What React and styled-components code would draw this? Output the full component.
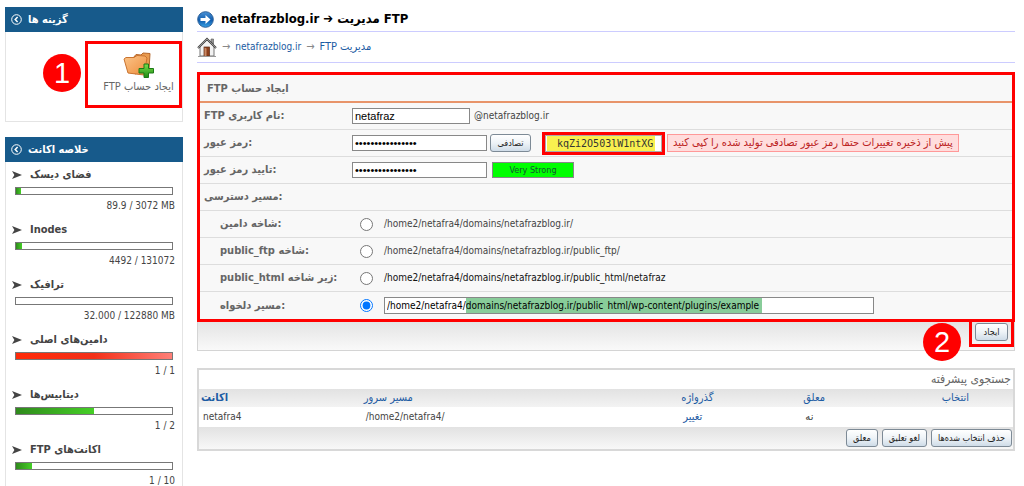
import React from 'react'
import styled, { createGlobalStyle } from 'styled-components'

const stats = [
  { title: 'فضای دیسک', value: '89.9 / 3072 MB', percent: 3 },
  { title: 'Inodes', value: '4492 / 131072', percent: 4 },
  { title: 'ترافیک', value: '32.000 / 122880 MB', percent: 0 },
  { title: 'دامین‌های اصلی', value: '1 / 1', percent: 100 },
  { title: 'دیتابیس‌ها', value: '1 / 2', percent: 50 },
  { title: 'اکانت‌های FTP', value: '1 / 10', percent: 10 },
]

const paths = [
  { id: 'domain', label: 'شاخه دامین', path: '/home2/netafra4/domains/netafrazblog.ir/' },
  { id: 'ftp', label: 'شاخه public_ftp', path: '/home2/netafra4/domains/netafrazblog.ir/public_ftp/' },
  { id: 'html', label: 'زیر شاخه public_html', path: '/home2/netafra4/domains/netafrazblog.ir/public_html/netafraz', dark: true },
]

const chevron = (
  <svg width='11' height='11' viewBox='0 0 11 11' fill='none' stroke='#fff'>
    <circle cx='5.5' cy='5.5' r='4.8' />
    <path d='M6.6 3 4.2 5.5 6.6 8' strokeWidth='1.5' />
  </svg>
)

const arrowHead = (
  <svg width='10' height='8' viewBox='0 0 10 8'>
    <path d='M0 0 10 4 0 8 2.4 4Z' fill='#444' />
  </svg>
)

const folderAdd = (
  <svg width='32' height='26' viewBox='0 0 32 26'>
    <defs>
      <linearGradient id='folder' x1='0' y1='0' x2='1' y2='1'>
        <stop offset='0' stopColor='#fbc58a' />
        <stop offset='1' stopColor='#ee8d3c' />
      </linearGradient>
      <linearGradient id='plus' x1='0' y1='0' x2='0' y2='1'>
        <stop offset='0' stopColor='#7be04a' />
        <stop offset='1' stopColor='#1d8a12' />
      </linearGradient>
    </defs>
    <path d='M10 6 13 2.500 18 3 20 1 27 1.500 26 18 12 22Z' fill='#e99a4e' stroke='#b5662a' />
    <path d='M1 7 3 5.500 11 5.500 14 3.500 22 4 24 6 21 23 5 21Z' fill='url(#folder)' stroke='#c9732f' />
    <path d='M21 12h4.500v4.500h5v4.500h-5v4.500h-4.500v-4.500h-5v-4.500h5Z' fill='url(#plus)' stroke='#1c7a16' />
  </svg>
)

const blueArrow = (
  <svg width='17' height='17' viewBox='0 0 17 17'>
    <defs>
      <linearGradient id='ball' x1='0' y1='0' x2='0' y2='1'>
        <stop offset='0' stopColor='#4b93d6' />
        <stop offset='0.55' stopColor='#0f5cae' />
        <stop offset='1' stopColor='#39a4e6' />
      </linearGradient>
    </defs>
    <circle cx='8.5' cy='8.5' r='7.8' fill='url(#ball)' stroke='#2c5f98' />
    <path d='M3.500 7h5V4l5 4.500-5 4.500v-3h-5Z' fill='#fff' />
  </svg>
)

const house = (
  <svg width='20' height='20' viewBox='0 0 20 20'>
    <path d='M14 2h2.500v5L14 5Z' fill='#999' stroke='#555' strokeWidth='.6' />
    <path d='M3 9 10 3l7 6v10H3Z' fill='#f2f2f2' stroke='#777' />
    <path d='M1 11 10 2l9 9' fill='none' stroke='#444' strokeWidth='2' />
    <path d='M1 11 10 2l9 9' fill='none' stroke='#ccc' strokeWidth='.6' />
    <rect x='7' y='10' width='5.500' height='9' fill='#8c3f1c' stroke='#5a2812' strokeWidth='.7' />
    <path d='M7.500 10.500 9.500 11.500v7.500H7.500Z' fill='#c98a66' />
    <path d='M1 19.500h18' stroke='#999' />
  </svg>
)

function FieldName({ children }) {
  return <><bdi dir='rtl'>{children}</bdi>:</>
}

function Sidebar() {
  return (
    <SidebarStyled>
      <section>
        <BoxTitle>{chevron}<span>گزینه ها</span></BoxTitle>
        <Options>
          <Step>1</Step>
          <CreateLink href='#create'>
            {folderAdd}
            <bdi dir='rtl'>ایجاد حساب FTP</bdi>
          </CreateLink>
        </Options>
      </section>
      <section>
        <BoxTitle>{chevron}<span>خلاصه اکانت</span></BoxTitle>
        <StatList>
          {stats.map((stat) => (
            <Stat key={stat.title}>
              <StatTitle>{arrowHead}<bdi>{stat.title}</bdi></StatTitle>
              <Meter><Fill $full={stat.percent === 100} style={{ width: `${stat.percent}%` }} /></Meter>
              <StatValue>{stat.value}</StatValue>
            </Stat>
          ))}
        </StatList>
      </section>
    </SidebarStyled>
  )
}

function CreateForm() {
  const [target, setTarget] = React.useState('custom')
  const [random, setRandom] = React.useState('kqZi2O503lW1ntXG')

  return (
    <form id='create' onSubmit={(e) => e.preventDefault()}>
      <Marked>
        <FormTitle><bdi dir='rtl'>ایجاد حساب FTP</bdi></FormTitle>
        <Row>
          <Name as='label' htmlFor='user'><FieldName>نام کاربری FTP</FieldName></Name>
          <TextInput id='user' $size='small' defaultValue='netafraz' />
          <Suffix>@netafrazblog.ir</Suffix>
        </Row>
        <Row>
          <Name as='label' htmlFor='pass'><FieldName>رمز عبور</FieldName></Name>
          <TextInput id='pass' type='password' defaultValue='kqZi2O503lW1ntXG' />
          <RandomButton type='button'>تصادفی</RandomButton>
          <Generated>
            <input aria-label='رمز عبور تصادفی' value={random} onChange={(e) => setRandom(e.target.value)} />
          </Generated>
          <Warning dir='rtl'>پیش از ذخیره تغییرات حتما رمز عبور تصادفی تولید شده را کپی کنید</Warning>
        </Row>
        <Row>
          <Name as='label' htmlFor='confirm'><FieldName>تایید رمز عبور</FieldName></Name>
          <TextInput id='confirm' type='password' defaultValue='kqZi2O503lW1ntXG' />
          <Strength>Very Strong</Strength>
        </Row>
        <Row>
          <Name><FieldName>مسیر دسترسی</FieldName></Name>
        </Row>
        {paths.map((item) => (
          <Row key={item.id}>
            <Name as='label' $indent htmlFor={item.id}><FieldName>{item.label}</FieldName></Name>
            <Radio id={item.id} name='path' checked={target === item.id} onChange={() => setTarget(item.id)} />
            <Path $dark={item.dark}>{item.path}</Path>
          </Row>
        ))}
        <Row>
          <Name as='label' $indent htmlFor='custom'><FieldName>مسیر دلخواه</FieldName></Name>
          <Radio id='custom' name='path' checked={target === 'custom'} onChange={() => setTarget('custom')} />
          <PathInput
            aria-label='مسیر دلخواه'
            defaultValue='/home2/netafra4/domains/netafrazblog.ir/public_html/wp-content/plugins/example'
          />
        </Row>
      </Marked>
      <FormFooter>
        <FooterStep>2</FooterStep>
        <SubmitFrame><Button type='submit'>ایجاد</Button></SubmitFrame>
      </FormFooter>
    </form>
  )
}

function Accounts() {
  return (
    <AccountsStyled>
      <Search><a href='#search'>جستجوی پیشرفته</a></Search>
      <Table>
        <thead>
          <tr>
            <Th $width='20%' $bold><a href='#account'>اکانت</a></Th>
            <Th $width='39%'><a href='#path'>مسیر سرور</a></Th>
            <Th $width='15%'><a href='#password'>گذرواژه</a></Th>
            <Th $width='17%'><a href='#suspended'>معلق</a></Th>
            <Th $width='9%'><a href='#select'>انتخاب</a></Th>
          </tr>
        </thead>
        <tbody>
          <tr>
            <td><Latin>netafra4</Latin></td>
            <td><Latin>/home2/netafra4/</Latin></td>
            <td><a href='#change'>تغییر</a></td>
            <td>نه</td>
            <td />
          </tr>
        </tbody>
      </Table>
      <Actions>
        <Button type='button'>معلق</Button>
        <Button type='button'>لغو تعلیق</Button>
        <Button type='button'>حذف انتخاب شده‌ها</Button>
      </Actions>
    </AccountsStyled>
  )
}

function App() {
  return (
    <>
      <GlobalStyle />
      <Page>
        <Sidebar />
        <Main>
          <Heading>{blueArrow}<h1>netafrazblog.ir ➔ مدیریت FTP</h1></Heading>
          <Breadcrumb>
            {house}
            <span>→</span>
            <a href='#domain'><Latin>netafrazblog.ir</Latin></a>
            <span>→</span>
            <a href='#ftp' dir='rtl'>مدیریت FTP</a>
          </Breadcrumb>
          <CreateForm />
          <Accounts />
        </Main>
      </Page>
    </>
  )
}

const GlobalStyle = createGlobalStyle`
  * {
    box-sizing: border-box;
  }

  body {
    margin: 0;
    overflow: hidden;
    background: #fff;
    color: #444;
    font-family: 'DejaVu Sans Condensed', 'DejaVu Sans', sans-serif;
    font-size: 11px;
    line-height: 14px;
  }

  a {
    color: #1c5ba3;
    text-decoration: none;
  }

  svg {
    flex: none;
  }
`

const Page = styled.div`
  display: flex;
  align-items: flex-start;
  gap: 14px;
  padding: 7px 9px 0 5px;
`

const SidebarStyled = styled.aside`
  display: flex;
  flex-direction: column;
  gap: 15px;
  flex: 0 0 178px;
`

const BoxTitle = styled.h2`
  display: flex;
  align-items: center;
  gap: 6px;
  height: 25px;
  margin: 0;
  padding-left: 6px;
  background: #175a8b;
  color: #fff;
  font-size: 11px;
`

const Options = styled.div`
  display: flex;
  justify-content: flex-end;
  align-items: flex-start;
  gap: 4px;
  height: 90px;
  padding-top: 9px;
  border: 1px solid #e4e4e4;
  border-top: none;
`

const Step = styled.span`
  display: flex;
  align-items: center;
  justify-content: center;
  width: 38px;
  height: 38px;
  margin-top: 13px;
  border-radius: 50%;
  background: #f00;
  color: #fff;
  font-family: 'Liberation Sans', sans-serif;
  font-size: 29px;
  line-height: 38px;
`

const CreateLink = styled.a`
  display: flex;
  flex-direction: column;
  align-items: center;
  gap: 2px;
  width: 97px;
  height: 67px;
  padding: 8px 0 0 10px;
  border: 3px solid #f00;
  color: #666;
  white-space: nowrap;
`

const StatList = styled.div`
  border: 1px solid #e4e4e4;
  border-top: none;
`

const Stat = styled.div`
  display: flex;
  flex-direction: column;
  gap: 4px;
  height: 55px;
  padding: 5px 7px 0 6px;
`

const StatTitle = styled.div`
  display: flex;
  align-items: center;
  gap: 8px;
  line-height: 16px;
  font-weight: bold;
`

const Meter = styled.div`
  height: 8px;
  margin: 0 2px 0 3px;
  border: 1px solid #777;
  background: #fff;
`

const Fill = styled.div`
  height: 100%;
  background: ${({ $full }) => $full
    ? 'linear-gradient(90deg, #ff2a08 0%, #f33018 50%, #ff8078 100%)'
    : 'linear-gradient(90deg, #2f8a1c, #45cf26)'};
`

const StatValue = styled.div`
  font-size: 10px;
  text-align: right;
`

const Main = styled.main`
  flex: 1;
  min-width: 0;
`

const Latin = styled.bdi`
  font-size: 10px;
`

const Heading = styled.header`
  display: flex;
  align-items: center;
  gap: 7px;
  height: 25px;
  border-bottom: 1px solid #ccf;

  h1 {
    margin: 0;
    color: #000;
    font-size: 13px;
  }
`

const Breadcrumb = styled.nav`
  display: flex;
  align-items: center;
  gap: 5px;
  height: 31px;
  margin-bottom: 9px;
  border-bottom: 1px solid #ccf;

  span {
    color: #888;
  }
`

const Marked = styled.div`
  border: 3px solid #f00;
  background: #f8f8f8;
`

const FormTitle = styled.h2`
  height: 28px;
  margin: 0;
  padding-left: 7px;
  border-bottom: 2px solid #e8946a;
  color: #666;
  font-size: 11px;
  line-height: 28px;
`

const Row = styled.div`
  display: flex;
  align-items: center;
  height: 27px;
  border-bottom: 1px solid #ddd;
  white-space: nowrap;

  &:last-child {
    border-bottom: none;
  }
`

const Name = styled.span`
  flex: 0 0 152px;
  padding-left: ${({ $indent }) => ($indent ? '20px' : '4px')};
  color: #666;
  font-weight: bold;
`

const TextInput = styled.input`
  width: ${({ $size }) => ($size === 'small' ? '118px' : '135px')};
  height: 16px;
  padding: 0 2px;
  border: 1px solid #888;
  background: #fff;
  color: #000;
  font-family: 'Liberation Sans', sans-serif;
  font-size: 11px;
`

const Suffix = styled.span`
  padding-left: 4px;
  font-size: 10px;
`

const Button = styled.button`
  height: 18px;
  padding: 0 6px;
  border: 1px solid #7d8a96;
  border-radius: 3px;
  background: linear-gradient(#fff, #eef3f7 50%, #cfdce8);
  color: #222;
  font-family: 'DejaVu Sans Condensed', sans-serif;
  font-size: 9px;
  line-height: 14px;
`

const RandomButton = styled(Button)`
  width: 41px;
  margin: 0 11px 0 3px;
  padding: 0;
`

const Generated = styled.div`
  display: flex;
  flex: 0 0 123px;
  height: 23px;
  border: 3px solid #f00;

  input {
    width: 100%;
    padding: 0 4px 0 11px;
    border: 1px solid #aaa;
    background: linear-gradient(#f9f04f, #f9f04f) 1px 0 / 108px 100% no-repeat #fff;
    color: #333;
    font-family: 'DejaVu Sans Mono', monospace;
    font-size: 10px;
  }
`

const Warning = styled.span`
  height: 18px;
  margin-left: 2px;
  padding: 0 5px;
  border: 1px solid #f99;
  background: #fdd;
  color: #b22;
  line-height: 16px;
`

const Strength = styled.output`
  width: 82px;
  height: 16px;
  margin-left: 5px;
  border: 1px solid #888;
  background: #0f0;
  color: #153;
  font-size: 9px;
  text-align: center;
`

const Radio = styled.input.attrs({ type: 'radio' })`
  width: 13px;
  height: 13px;
  margin: 0 11px 0 8px;
`

const Path = styled.span`
  color: ${({ $dark }) => ($dark ? '#111' : '#444')};
  font-size: 10px;
`

const PathInput = styled(TextInput)`
  width: 490px;
  height: 17px;
  background: linear-gradient(#8c9, #8c9) 81px 0 / 296px 100% no-repeat #fff;
  font-family: 'DejaVu Sans Condensed', sans-serif;
  font-size: 10px;
  line-height: 15px;
`

const FormFooter = styled.div`
  position: relative;
  display: flex;
  justify-content: flex-end;
  height: 29px;
  border: 1px solid #d4d4d4;
  border-top: none;
  background: linear-gradient(#e4e4e4, #f9f9f9);
`

const FooterStep = styled(Step)`
  position: absolute;
  right: 53px;
  bottom: -11px;
`

const SubmitFrame = styled.div`
  display: flex;
  width: 45px;
  height: 25px;
  padding: 1px 3px 3px;
  border: 3px solid #f00;
  border-top: none;

  button {
    flex: 1;
  }
`

const AccountsStyled = styled.section`
  margin-top: 17px;
  border: 2px solid #d8d8d8;
`

const Search = styled.div`
  height: 19px;
  padding-right: 2px;
  text-align: right;
  font-size: 12px;
  line-height: 19px;

  a {
    color: #666;
  }
`

const Table = styled.table`
  width: 100%;
  table-layout: fixed;
  border-collapse: collapse;

  td {
    height: 20px;
    padding: 0 4px;
  }
`

const Th = styled.th`
  width: ${({ $width }) => $width};
  height: 18px;
  padding: 0 2px;
  background: linear-gradient(#e2e2e2, #f3f3f3);
  text-align: left;
  font-weight: ${({ $bold }) => ($bold ? 'bold' : 'normal')};
`

const Actions = styled.div`
  display: flex;
  justify-content: flex-end;
  align-items: center;
  gap: 4px;
  height: 22px;
  padding-right: 1px;
  background: linear-gradient(#e2e2e2, #f8f8f8);
`

export default App
